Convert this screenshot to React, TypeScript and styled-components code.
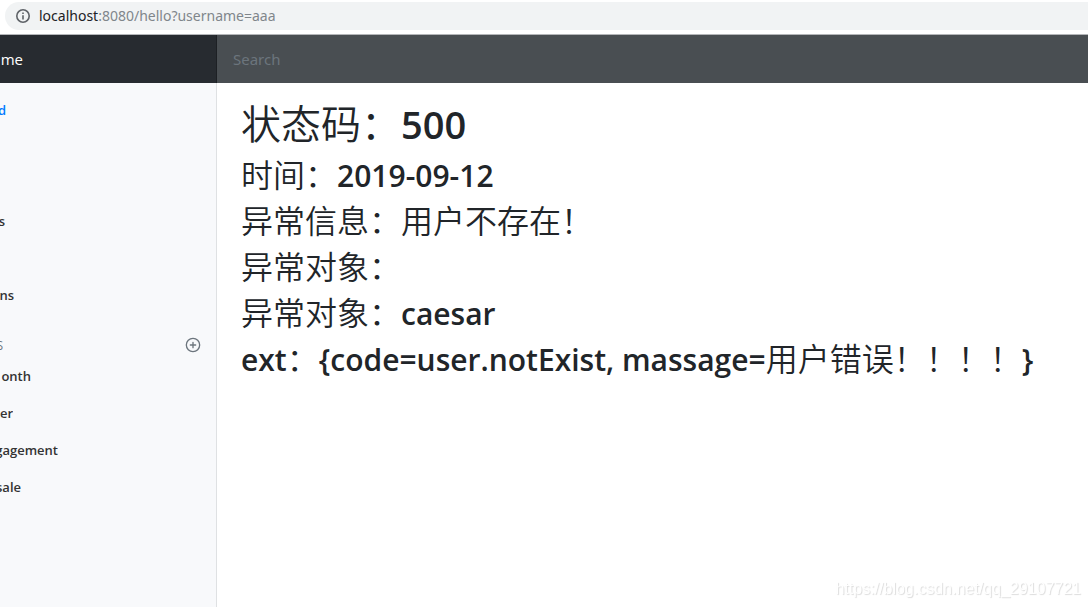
import React from "react";
import styled, { createGlobalStyle } from "styled-components";

const Global = createGlobalStyle`
  *, *::before, *::after { box-sizing: border-box; }
  html { overflow: hidden; }
  body {
    margin: 0;
    background: #fff;
    color: #212529;
    font-family: "Open Sans", "Noto Sans CJK SC", sans-serif;
    font-size: 14px;
  }
`;

const Page = styled.div`
  min-height: 100vh;
  display: flex;
  flex-direction: column;
`;

const BrowserBar = styled.div`
  height: 35px;
  padding: 2px 0 0 5px;
  border-bottom: 1px solid #b4b6b9;
`;

const Address = styled.div`
  height: 28px;
  display: flex;
  align-items: center;
  gap: 8px;
  padding-left: 10px;
  border-radius: 14px 0 0 14px;
  background: #f1f3f4;
  color: #80868b;
  font-family: "Noto Sans", sans-serif;
  font-size: 14px;
  line-height: 20px;
`;

const Host = styled.span`
  color: #202124;
`;

const Navbar = styled.header`
  display: flex;
  height: 48px;
  background: #343a40;
`;

const Brand = styled.a`
  flex: 0 0 217px;
  display: flex;
  align-items: center;
  background: #272b30;
  box-shadow: inset -1px 0 0 #1d2024;
  color: #fff;
  font-size: 15px;
  font-weight: 500;
  text-decoration: none;
`;

const Clip = styled.span<{ $end: number }>`
  width: ${(p) => p.$end}px;
  display: flex;
  justify-content: flex-end;
  overflow: hidden;
  white-space: nowrap;
`;

const Search = styled.input`
  flex: 1;
  min-width: 0;
  padding: 0 16px;
  border: 0;
  border-radius: 0;
  outline: 0;
  background: #494e52;
  color: #fff;
  font-family: "Noto Sans", sans-serif;
  font-size: 15px;
  &::placeholder { color: #6c757d; opacity: 1; }
`;

const Body = styled.div`
  flex: 1;
  display: flex;
`;

const Sidebar = styled.nav`
  flex: 0 0 217px;
  padding-top: 9px;
  background: #f8f9fb;
  box-shadow: inset -1px 0 0 #dfe1e3;
`;

const NavList = styled.ul`
  margin: 0;
  padding: 0;
  list-style: none;
`;

const NavItem = styled.li`
  height: 37px;
`;

const NavLink = styled.a<{ $active?: boolean }>`
  display: flex;
  align-items: center;
  height: 37px;
  color: ${(p) => (p.$active ? "#007bff" : "#333")};
  font-size: 13px;
  font-weight: 600;
  line-height: 21px;
  text-decoration: none;
`;

const SavedHeading = styled.h6`
  display: flex;
  align-items: center;
  justify-content: space-between;
  height: 16px;
  margin: 23px 0 5px;
  padding-right: 16px;
  color: #6c757d;
  font-size: 12px;
  font-weight: 400;
`;

const AddButton = styled.button`
  display: flex;
  padding: 0;
  border: 0;
  background: none;
  color: #6c757d;
`;

const Main = styled.main`
  flex: 1;
  min-width: 0;
  display: flex;
  flex-direction: column;
  padding: 17px 24px 0;
`;

const Title = styled.h1`
  margin: 0 0 8px;
  font-size: 40px;
  font-weight: 350;
  line-height: 48px;
  white-space: nowrap;
`;

const Line = styled.h2`
  height: 38px;
  margin: 0 0 8px;
  font-size: 32px;
  font-weight: 350;
  line-height: 38px;
  white-space: nowrap;
`;

const Latin = styled.span<{ $size: number }>`
  font-size: ${(p) => p.$size}px;
  font-weight: 600;
`;

const Watermark = styled.div`
  position: fixed;
  right: 7px;
  bottom: 9px;
  color: #fff;
  font-family: "Liberation Sans", sans-serif;
  font-size: 16px;
  line-height: 18px;
  text-shadow: 1px 1px 1px #dcdcdc;
`;

const InfoIcon = () => (
  <svg width="16" height="16" viewBox="0 0 16 16" fill="none" stroke="#5f6368" strokeWidth="1.6" aria-hidden="true">
    <circle cx="8" cy="8" r="6.2" />
    <path d="M8 7.2v4.2M8 4.4v1.6" />
  </svg>
);

const PlusCircle = () => (
  <svg width="16" height="16" viewBox="0 0 24 24" fill="none" stroke="currentColor" strokeWidth="2" strokeLinecap="round" strokeLinejoin="round" aria-hidden="true">
    <circle cx="12" cy="12" r="10" />
    <path d="M12 8v8M8 12h8" />
  </svg>
);

type Entry = { text: string; end: number; active?: boolean };

const sections: Entry[] = [
  { text: "d", end: 6, active: true },
  { text: "", end: 0 },
  { text: "", end: 0 },
  { text: "s", end: 5 },
  { text: "", end: 0 },
  { text: "ns", end: 14 },
];

const reports: Entry[] = [
  { text: "onth", end: 31 },
  { text: "ter", end: 13 },
  { text: "gagement", end: 58 },
  { text: "sale", end: 21 },
];

const Entries = ({ items }: { items: Entry[] }) => (
  <NavList>
    {items.map((item, i) => (
      <NavItem key={i}>
        {item.text && (
          <NavLink href="#" $active={item.active}>
            <Clip $end={item.end}>{item.text}</Clip>
          </NavLink>
        )}
      </NavItem>
    ))}
  </NavList>
);

export default function App() {
  return (
    <>
      <Global />
      <Page>
        <BrowserBar>
          <Address>
            <InfoIcon />
            <span>
              <Host>localhost</Host>:8080/hello?username=aaa
            </span>
          </Address>
        </BrowserBar>
        <Navbar>
          <Brand href="#">
            <Clip $end={23}>ame</Clip>
          </Brand>
          <Search type="text" placeholder="Search" aria-label="Search" />
        </Navbar>
        <Body>
          <Sidebar>
            <Entries items={sections} />
            <SavedHeading>
              <Clip $end={3}>S</Clip>
              <AddButton type="button" aria-label="Add">
                <PlusCircle />
              </AddButton>
            </SavedHeading>
            <Entries items={reports} />
          </Sidebar>
          <Main>
            <Title>
              状态码：<Latin $size={38}>500</Latin>
            </Title>
            <Line>
              时间：<Latin $size={30}>2019-09-12</Latin>
            </Line>
            <Line>异常信息：用户不存在！</Line>
            <Line>异常对象：</Line>
            <Line>
              异常对象：<Latin $size={30}>caesar</Latin>
            </Line>
            <Line>
              <Latin $size={30}>ext</Latin>：<Latin $size={30}>{"{code=user.notExist, massage="}</Latin>
              用户错误！！！！<Latin $size={30}>{"}"}</Latin>
            </Line>
          </Main>
        </Body>
      </Page>
      <Watermark>https://blog.csdn.net/qq_29107721</Watermark>
    </>
  );
}
